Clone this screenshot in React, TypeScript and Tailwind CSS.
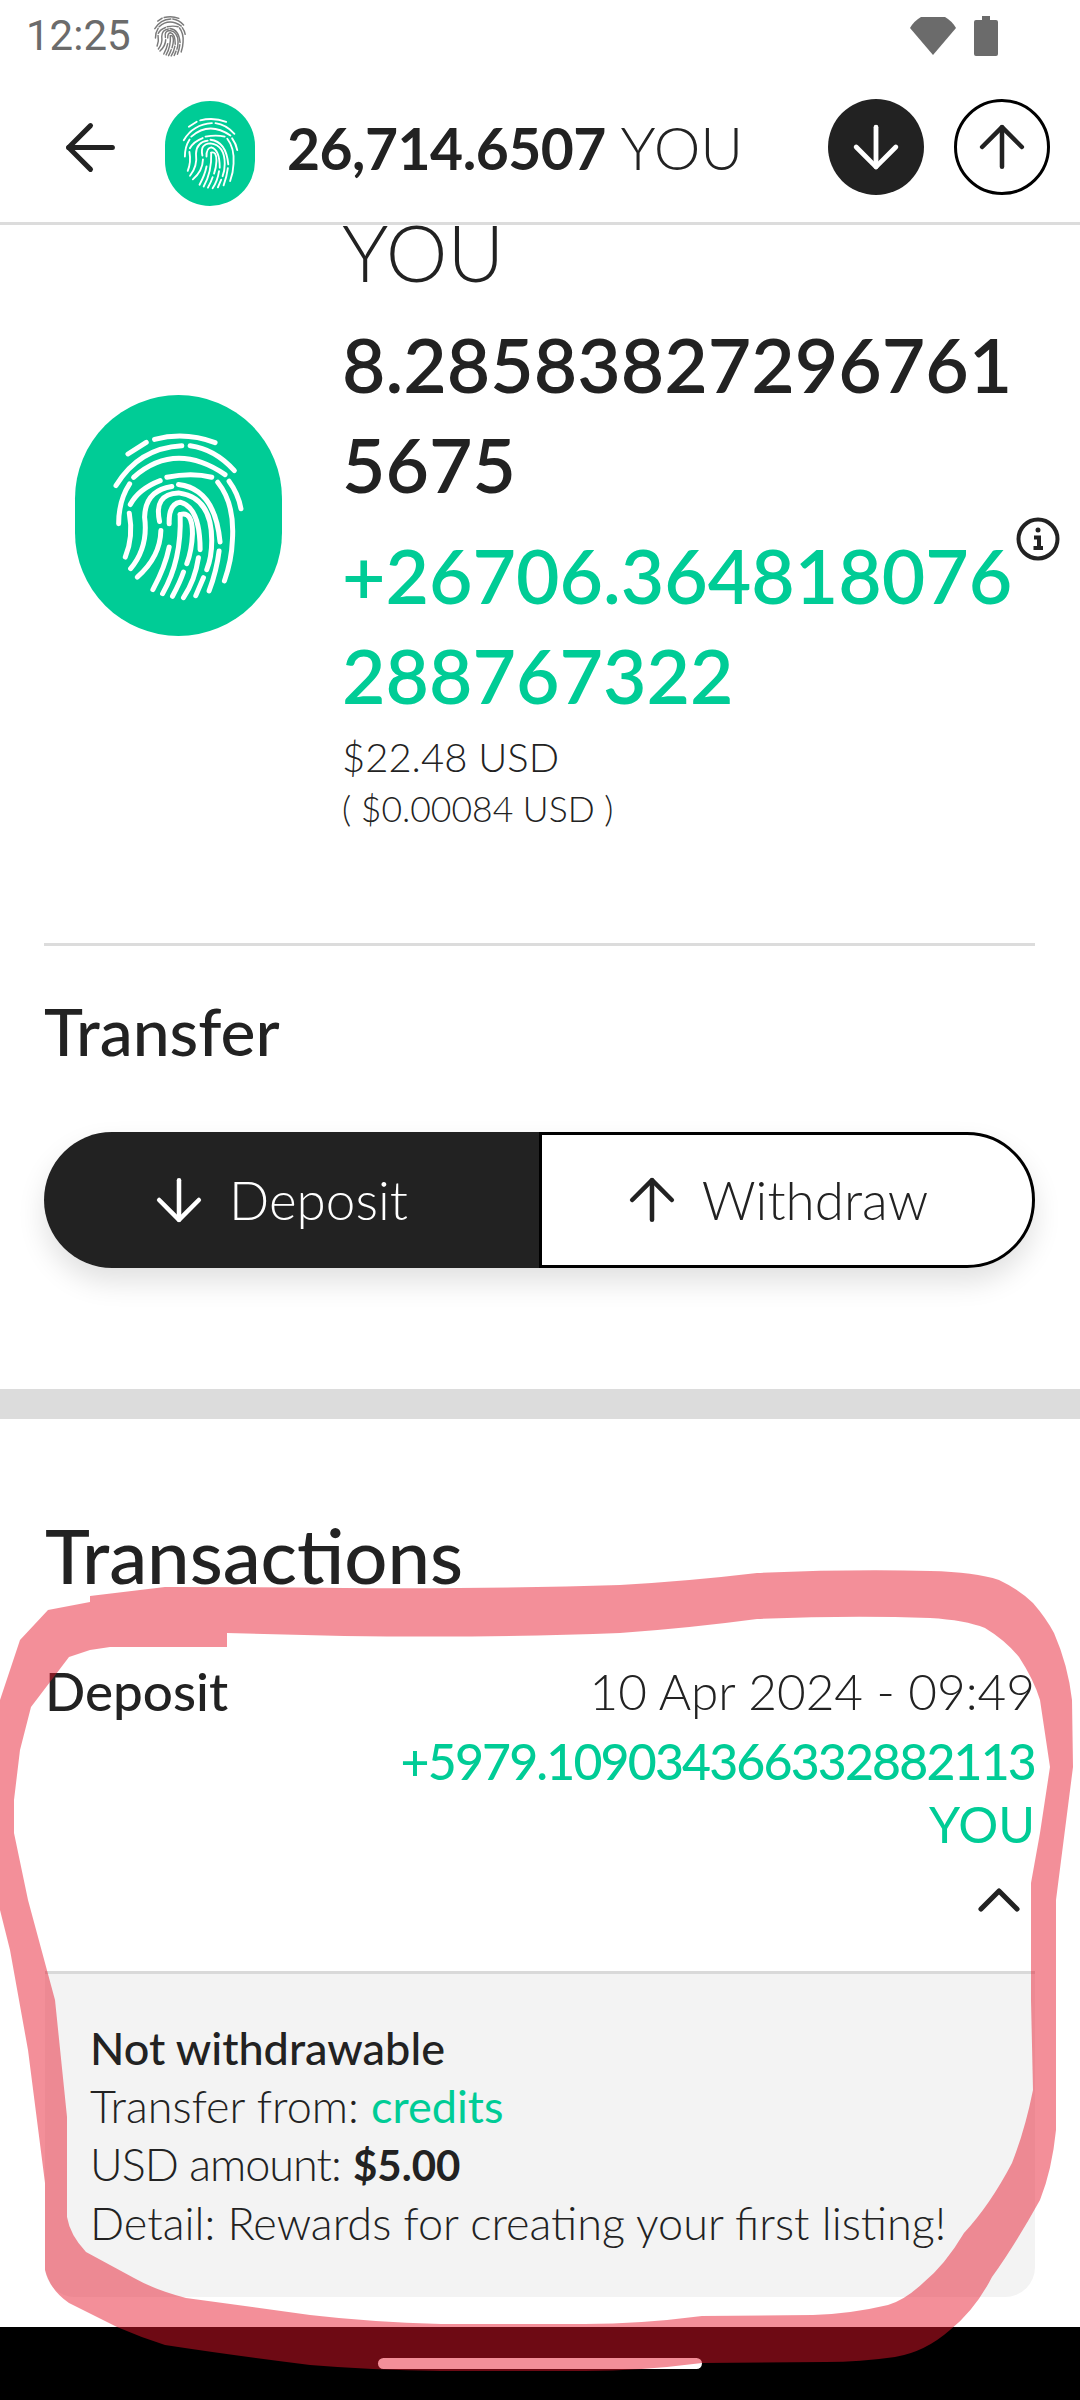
import React from 'react';
import { ArrowLeft, ArrowDown, ArrowUp, ChevronUp } from 'lucide-react';

const font = { fontFamily: 'Lato, "Noto Sans", sans-serif' };

// Fingerprint ridges, traced from the big logo
const ridges = [
  'M388 280 L443 245',
  'M468 236 Q560 212 650 246',
  'M352 375 Q420 262 550 255',
  'M575 255 Q650 265 708 330',
  'M405 350 Q530 240 680 342',
  'M393 370 Q360 420 360 490',
  'M692 362 Q720 400 728 445',
  'M505 350 Q580 335 640 350',
  'M395 432 Q420 385 485 360',
  'M658 365 Q710 430 702 540 Q700 600 678 662',
  'M392 458 Q405 530 380 590',
  'M520 378 Q440 390 438 470 Q450 560 396 625',
  'M540 372 Q650 385 665 545',
  'M483 483 Q465 400 540 397 Q640 410 640 540 Q640 590 625 628',
  'M512 490 Q510 430 545 425 Q605 440 605 568',
  'M545 462 Q582 450 582 520 Q580 570 565 610',
  'M487 510 Q485 590 416 650',
  'M512 560 Q500 620 463 688',
  'M545 462 Q550 600 492 700',
  'M600 592 Q590 660 555 712',
  'M662 572 Q655 630 632 692',
  'M555 635 Q545 665 522 708',
  'M615 652 L592 706',
];

function FingerprintMark({ className, stroke = '#fff', width = 15 }: { className?: string; stroke?: string; width?: number }) {
  return (
    <svg viewBox="340 205 400 520" className={className} fill="none" stroke={stroke} strokeWidth={width} strokeLinecap="round">
      {ridges.map((d) => (
        <path key={d} d={d} />
      ))}
    </svg>
  );
}

function StatusBar() {
  return (
    <div className="h-[72px] flex items-center justify-between pl-[26px] pr-[82px] text-[#6b6b6b]">
      <div className="flex items-center gap-[22px]">
        <span className="text-[42px] leading-none" style={{ fontFamily: 'Roboto, sans-serif' }}>12:25</span>
        <FingerprintMark className="w-[34px] h-[42px]" stroke="#7a7a7a" width={18} />
      </div>
      <div className="flex items-center gap-[18px]">
        <svg viewBox="0 0 46 38" className="w-[46px] h-[38px]" fill="#6b6b6b">
          <path d="M0 11 Q4 4 11 0 L35 0 Q42 4 46 11 L23 38 Z" />
        </svg>
        <svg viewBox="0 0 24 40" className="w-[24px] h-[40px]" fill="#6b6b6b">
          <path d="M8 0 H16 V4 H22 Q24 4 24 6 V38 Q24 40 22 40 H2 Q0 40 0 38 V6 Q0 4 2 4 H8 Z" />
        </svg>
      </div>
    </div>
  );
}

function Header() {
  return (
    <div className="h-[153px] flex items-center border-b-[3px] border-[#dcdcdc] pl-[53px] pr-[30px] text-[#222]">
      <ArrowLeft size={75} strokeWidth={1.6} />
      <div className="ml-[37px] mt-[12px] w-[90px] h-[105px] rounded-full bg-[#00cc96] flex items-center justify-center">
        <FingerprintMark className="w-[57px] h-[74px]" width={13} />
      </div>
      <div className="ml-[32px] text-[57px] leading-none flex-1 whitespace-nowrap">
        <span className="font-bold tracking-[-0.5px]">26,714.6507</span> <span className="font-light text-[59px]">YOU</span>
      </div>
      <div className="w-[96px] h-[96px] rounded-full bg-[#222] text-white flex items-center justify-center">
        <ArrowDown size={68} strokeWidth={1.7} />
      </div>
      <div className="ml-[30px] w-[96px] h-[96px] rounded-full border-[3px] border-black flex items-center justify-center">
        <ArrowUp size={68} strokeWidth={1.6} />
      </div>
    </div>
  );
}

function Hero() {
  return (
    <div className="relative flex items-center pl-[75px] -mt-[23px] h-[700px]">
      <div className="w-[207px] h-[241px] rounded-full bg-[#00cc96] flex items-center justify-center -mt-[74px]">
        <FingerprintMark className="w-[133px] h-[173px]" />
      </div>
      <div className="ml-[60px] pb-[68px] text-[#222]">
        <div className="text-[78px] leading-[100px] font-light">YOU</div>
        <div className="text-[75px] leading-[100px] font-semibold mt-[12px] whitespace-nowrap">8.28583827296761</div>
        <div className="text-[75px] leading-[100px] font-semibold whitespace-nowrap">5675</div>
        <div className="text-[75px] leading-[100px] font-semibold text-[#00cc96] mt-[11px] whitespace-nowrap">+26706.364818076</div>
        <div className="text-[75px] leading-[100px] font-semibold text-[#00cc96] whitespace-nowrap">288767322</div>
        <div className="text-[40px] leading-[52px] font-light mt-[6px]">$22.48 USD</div>
        <div className="text-[35.5px] leading-[52px] font-light">( $0.00084 USD )</div>
      </div>
      <svg viewBox="0 0 44 44" className="absolute left-[1016px] top-[315px] w-[44px] h-[44px]" fill="none" stroke="#222" strokeWidth="4">
        <circle cx="22" cy="22" r="19.5" />
        <circle cx="22" cy="13" r="2.5" fill="#222" stroke="none" />
        <path d="M18 20.5 H23 V30 M17.5 31 H27" strokeWidth="4" />
      </svg>
    </div>
  );
}

function TransferSection() {
  return (
    <div className="ml-[44px] mr-[45px]">
      <div className="border-t-[3px] border-[#dcdcdc] mt-[41px] pt-[54px] text-[66px] leading-[62px] font-medium text-[#222]">Transfer</div>
      <div className="mt-[70px] h-[136px] flex shadow-[0_14px_28px_rgba(0,0,0,0.12)] rounded-full text-[53px]">
        <div className="w-[495px] bg-[#222] rounded-l-full text-white flex items-center justify-center gap-[16px] font-light pr-[30px]">
          <ArrowDown size={68} strokeWidth={1.6} />
          <span>Deposit</span>
        </div>
        <div className="flex-1 bg-white border-[3px] border-black rounded-r-full text-[#222] flex items-center justify-center gap-[16px] font-light pr-[28px]">
          <ArrowUp size={68} strokeWidth={1.6} />
          <span>Withdraw</span>
        </div>
      </div>
    </div>
  );
}

function TransactionSection() {
  return (
    <div className="px-[45px] text-[#222]">
      <div className="pt-[102px] text-[76px] leading-[68px] font-medium">Transactions</div>
      <div className="mt-[72px] flex justify-between items-start">
        <span className="text-[53px] leading-[60px] font-medium">Deposit</span>
        <div className="text-right">
          <div className="text-[49.5px] leading-[60px] font-light">10 Apr 2024 - 09:49</div>
          <div className="mt-[9px] text-[50px] leading-[63px] text-[#00cc96]">
            <div className="tracking-[-1.85px] font-medium">+5979.109034366332882113</div>
            <div>YOU</div>
          </div>
          <div className="mt-[8px] flex justify-end">
            <ChevronUp size={72} strokeWidth={1.7} />
          </div>
        </div>
      </div>
      <div className="mt-[35px] h-[326px] bg-[#f3f3f3] border-t-[3px] border-[#d9d9d9] rounded-b-[30px] pl-[45px] pt-[45px] text-[45px] leading-[58px] font-light whitespace-nowrap">
        <div className="font-medium">Not withdrawable</div>
        <div>Transfer from: <span className="text-[#00cc96] font-normal">credits</span></div>
        <div><span className="tracking-[-1px]">USD amount:</span> <span className="font-bold text-[42px]">$5.00</span></div>
        <div>Detail: Rewards for creating your first listing!</div>
      </div>
    </div>
  );
}

// Hand-drawn marker ring that was painted over the screenshot
function MarkerRing() {
  const outer = 'M90 1596 L165 1587 Q250 1587 344 1588 Q500 1589 620 1585 Q690 1581 757 1573 Q850 1569 930 1571 Q975 1572 999 1580 Q1020 1590 1033 1603 Q1046 1618 1054 1633 Q1068 1665 1072 1700 L1073 1767 L1056 1900 L1056 2130 Q1052 2170 1040 2200 Q1015 2245 992 2277 Q975 2310 950 2330 Q925 2352 895 2357 Q860 2362 826 2362 L702 2363 Q640 2371 585 2371 L441 2371 Q370 2370 310 2365 Q230 2355 165 2345 Q140 2337 117 2327 L69 2303 Q50 2290 45 2270 L45 2183 L28 2050 L10 1950 L0 1910 L0 1700 L20 1640 L48 1610 L90 1602 Z';
  const inner = 'M227 1633 L344 1636 Q500 1638 620 1633 Q690 1628 757 1619 Q850 1615 930 1618 Q965 1620 985 1628 Q1005 1640 1019 1657 Q1034 1680 1040 1700 L1050 1767 L1040 1833 L1031 1883 L1031 2000 L1033 2090 Q1025 2130 1012 2163 Q990 2205 964 2233 Q945 2265 923 2283 Q905 2300 888 2305 Q850 2314 813 2315 L702 2316 Q640 2324 585 2324 L441 2324 Q370 2322 310 2315 L186 2298 Q155 2290 134 2278 L86 2252 Q70 2235 67 2217 L67 2117 L55 2000 L28 1900 L14 1833 L14 1800 L20 1750 L31 1707 L69 1657 L90 1650 L110 1647 L227 1647 Z';
  return (
    <svg viewBox="0 0 1080 2400" className="absolute inset-0 w-[1080px] h-[2400px] pointer-events-none">
      <path d={`${outer} ${inner}`} fillRule="evenodd" fill="#e5152a" fillOpacity="0.48" />
    </svg>
  );
}

export default function App() {
  return (
    <div className="relative w-[1080px] h-[2400px] bg-white flex flex-col overflow-hidden" style={font}>
      <StatusBar />
      <Header />
      <main className="flex-1 overflow-hidden">
        <Hero />
        <TransferSection />
        <div className="mt-[121px] h-[30px] bg-[#dcdcdc]" />
        <TransactionSection />
      </main>
      <div className="h-[73px] bg-black flex justify-center pt-[31px]">
        <div className="w-[324px] h-[11px] rounded-full bg-white" />
      </div>
      <MarkerRing />
    </div>
  );
}
